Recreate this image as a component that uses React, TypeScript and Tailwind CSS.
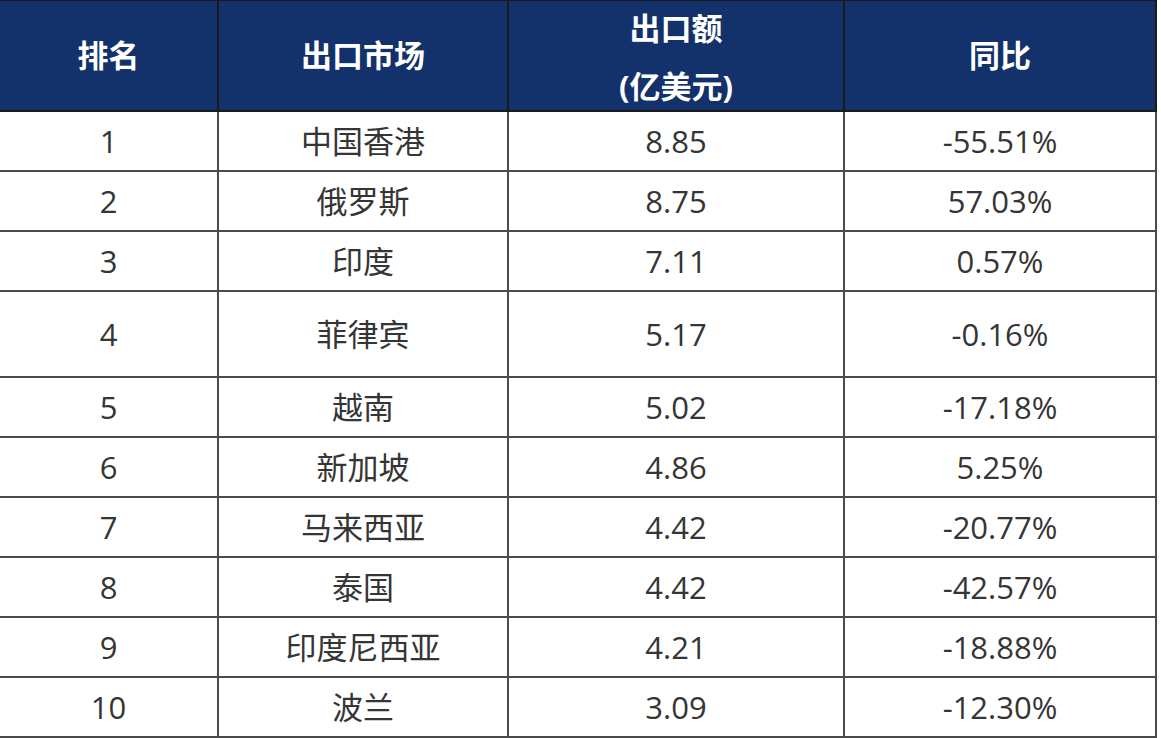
import React from "react";

const rows: [string, string, string, string, number][] = [
  ["1", "中国香港", "8.85", "-55.51%", 60],
  ["2", "俄罗斯", "8.75", "57.03%", 60],
  ["3", "印度", "7.11", "0.57%", 60],
  ["4", "菲律宾", "5.17", "-0.16%", 86],
  ["5", "越南", "5.02", "-17.18%", 60],
  ["6", "新加坡", "4.86", "5.25%", 60],
  ["7", "马来西亚", "4.42", "-20.77%", 60],
  ["8", "泰国", "4.42", "-42.57%", 60],
  ["9", "印度尼西亚", "4.21", "-18.88%", 60],
  ["10", "波兰", "3.09", "-12.30%", 60],
];

const heights: Record<number, string> = {
  60: "h-[60px]",
  86: "h-[86px]",
};

export default function App() {
  return (
    <div className="w-[1161px] h-[738px] bg-white overflow-hidden">
      <table
        className="ml-[-2px] mt-[-1px] w-[1157px] border-collapse table-fixed text-center text-[31px] text-[#353535]"
        style={{ fontFamily: '"Open Sans", "Noto Sans CJK SC", sans-serif' }}
      >
        <colgroup>
          <col className="w-[219px]" />
          <col className="w-[290px]" />
          <col className="w-[336px]" />
          <col className="w-[312px]" />
        </colgroup>
        <thead>
          <tr className="h-[111px] bg-[#13316a] text-white text-[31px]">
            <th className="border-2 border-[#1a1a1a] font-bold p-0">排名</th>
            <th className="border-2 border-[#1a1a1a] font-bold p-0">出口市场</th>
            <th className="border-2 border-[#1a1a1a] font-bold p-0">
              <div className="flex h-[107px] flex-col items-center pt-[6px] gap-[18px] leading-[40px]">
                <span>出口额</span>
                <span>(亿美元)</span>
              </div>
            </th>
            <th className="border-2 border-[#1a1a1a] font-bold p-0">同比</th>
          </tr>
        </thead>
        <tbody>
          {rows.map(([rank, market, amount, yoy, h]) => (
            <tr key={rank} className={heights[h]}>
              <td className="border-2 border-[#4a4a4a] p-0">{rank}</td>
              <td className="border-2 border-[#4a4a4a] p-0">{market}</td>
              <td className="border-2 border-[#4a4a4a] p-0">{amount}</td>
              <td className="border-2 border-[#4a4a4a] p-0">{yoy}</td>
            </tr>
          ))}
        </tbody>
      </table>
    </div>
  );
}
